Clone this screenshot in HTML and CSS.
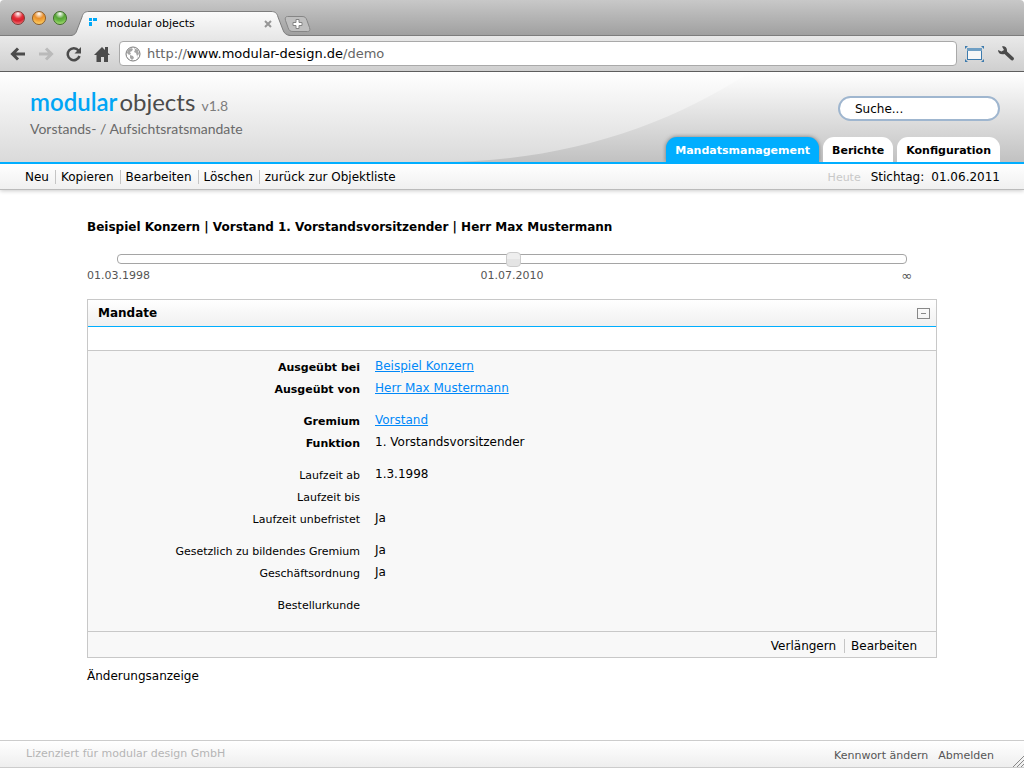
FILE: index.html
```html
<!DOCTYPE html>
<html lang="de">
<head>
  <meta charset="UTF-8">
  <meta name="viewport" content="width=device-width, initial-scale=1.0">
  <title>modular objects</title>
  <link rel="stylesheet" href="styles.css">
</head>
<body>

  <!-- Browserfenster -->
  <div class="browser">
    <div class="titlebar">
      <div class="lights">
        <span class="light red"></span>
        <span class="light orange"></span>
        <span class="light green"></span>
      </div>
      <div class="tab">
        <svg class="tab-shape" width="220" height="25" viewBox="0 0 220 25">
          <defs>
            <linearGradient id="tabFill" x1="0" y1="0" x2="0" y2="1">
              <stop offset="0" stop-color="#fbfbfb"/>
              <stop offset="1" stop-color="#e9e9e9"/>
            </linearGradient>
          </defs>
          <path d="M0 25C4 24 5 22 6 19L11 6C12 2 14 .5 18 .5H200C204 .5 206 2 207 6L212 19C213 22 215 24 219 25Z" fill="url(#tabFill)"/>
          <path d="M0 24.500C4 24 5 22 6 19L11 6C12 2 14 .5 18 .5H200C204 .5 206 2 207 6L212 19C213 22 215 24 219 24.500" fill="none" stroke="#7d7d7d"/>
        </svg>
        <svg class="favicon" width="8" height="8" viewBox="0 0 8 8" fill="#00a8f8">
          <path d="M0 0h3v3H0zM4 0h4v3H4zM0 4h3v4H0z"/>
        </svg>
        <span class="tab-title">modular objects</span>
        <button class="tab-close" aria-label="Tab schließen">
          <svg width="8" height="8" viewBox="0 0 8 8"><path d="M1 1l6 6M7 1L1 7" stroke="#969696" stroke-width="2"/></svg>
        </button>
      </div>
      <button class="new-tab" aria-label="Neuer Tab">
        <svg width="27" height="16" viewBox="0 0 27 16">
          <path d="M3.500 .5H18c3 0 4 1 5 4l2.500 7c1 3 0 4-2 4H9c-3 0-4-1-5-4L1.500 4.500C.8 2 1.500 .5 3.500 .5Z" fill="#bfbfbf" stroke="#868686"/>
          <path d="M12 3.500h3v3h3v3h-3v3h-3v-3H9v-3h3z" fill="#fff" stroke="#848484"/>
        </svg>
      </button>
    </div>
    <div class="navbar">
      <button class="nav-btn" aria-label="Zurück">
        <svg width="16" height="16" viewBox="0 0 16 16"><path d="M8 2.500L2.500 8 8 13.500M3 8h12" fill="none" stroke="#4b4b4b" stroke-width="3"/></svg>
      </button>
      <button class="nav-btn" aria-label="Vorwärts">
        <svg width="16" height="16" viewBox="0 0 16 16"><path d="M8 2.500L13.500 8 8 13.500M13 8H1" fill="none" stroke="#bababa" stroke-width="3"/></svg>
      </button>
      <button class="nav-btn" aria-label="Neu laden">
        <svg width="16" height="16" viewBox="0 0 16 16">
          <path d="M12.500 4.500A6 6 0 1 0 13.500 10" fill="none" stroke="#4b4b4b" stroke-width="2.500"/>
          <path d="M15 1v6.500H8.500z" fill="#4b4b4b"/>
        </svg>
      </button>
      <button class="nav-btn" aria-label="Startseite">
        <svg width="16" height="16" viewBox="0 0 16 16" fill="#4b4b4b"><path d="M8 1L0 9h2.500v7H7v-5h3v5h4V9h2l-2-2V1h-3v3z"/></svg>
      </button>
      <label class="address">
        <svg width="16" height="16" viewBox="0 0 16 16">
          <circle cx="8" cy="8" r="7" fill="#fff" stroke="#777"/>
          <path d="M2.500 4L6 2l2 1-1 2-2 1 1 2-2 1-2-2zM9 2l4 2 1 4-2 2-1-3-2-1 1-2zM5 9l3 1 1 2-2 2-2-2zM12 11l1-1-1 2z" fill="#a6a6a6"/>
        </svg>
        <span class="url"><span>http://</span>www.modular-design.de<span>/demo</span></span>
      </label>
      <button class="nav-btn" aria-label="Vollbild">
        <svg width="20" height="18" viewBox="0 0 20 18">
          <path d="M0 1h3L0 4zM19 1h-3l3 3zM0 17h3l-3-3zM19 17h-3l3-3z" fill="#3d7bad"/>
          <rect x="2.500" y="4.500" width="14" height="10" fill="#f6f6f6" stroke="#3d7bad"/>
          <path d="M2 3h15v3H2z" fill="#6f9fc4"/>
        </svg>
      </button>
      <button class="nav-btn" aria-label="Einstellungen">
        <svg width="18" height="18" viewBox="0 0 18 18">
          <path d="M5 1.500C8 .5 10.500 3 10 6.500l6.500 6c1.500 1.500-1 4-2.500 2.500L7.500 9C4 10 1 8.500 1 5l3.500 1.500L7 5z" fill="#4b4b4b"/>
        </svg>
      </button>
    </div>
  </div>

  <!-- Kopfbereich -->
  <header class="header">
    <svg class="swoosh" width="584" height="90" viewBox="0 0 584 90">
      <defs>
        <linearGradient id="swooshFill" x1="0" y1="0" x2="0" y2="1">
          <stop offset="0" stop-color="#ffffff"/>
          <stop offset="0.150" stop-color="#f6f6f6"/>
          <stop offset="1" stop-color="#c1c1c1"/>
        </linearGradient>
      </defs>
      <path d="M0 90C120 90 225 56 310 0H584V90Z" fill="url(#swooshFill)"/>
    </svg>
    <div class="brand">
      <div class="logo"><b>modular</b><span>objects</span> <small>v1.8</small></div>
      <div class="subtitle">Vorstands- / Aufsichtsratsmandate</div>
    </div>
    <div class="header-right">
      <input class="search" type="text" value="Suche..." aria-label="Suche">
      <nav class="tabs">
        <a class="active" href="#">Mandatsmanagement</a>
        <a href="#">Berichte</a>
        <a href="#">Konfiguration</a>
      </nav>
    </div>
  </header>

  <div class="toolbar">
    <nav class="actions">
      <a href="#">Neu</a>
      <a href="#">Kopieren</a>
      <a href="#">Bearbeiten</a>
      <a href="#">Löschen</a>
      <a href="#">zurück zur Objektliste</a>
    </nav>
    <div class="date">
      <a href="#">Heute</a>
      <span>Stichtag:</span>
      <span>01.06.2011</span>
    </div>
  </div>

  <!-- Inhalt -->
  <main class="content">
    <h1>Beispiel Konzern | Vorstand 1. Vorstandsvorsitzender | Herr Max Mustermann</h1>

    <div class="timeline">
      <input type="range" min="0" max="1000" value="502" aria-label="Zeitpunkt">
      <div class="timeline-labels">
        <span>01.03.1998</span>
        <span>01.07.2010</span>
        <span class="open-end">∞</span>
      </div>
    </div>

    <section class="panel">
      <div class="panel-head">
        <h2>Mandate</h2>
        <button class="collapse" aria-label="Einklappen"></button>
      </div>
      <div class="panel-space"></div>
      <div class="panel-body">
        <dl class="group strong">
          <dt>Ausgeübt bei</dt><dd><a href="#">Beispiel Konzern</a></dd>
          <dt>Ausgeübt von</dt><dd><a href="#">Herr Max Mustermann</a></dd>
        </dl>
        <dl class="group strong">
          <dt>Gremium</dt><dd><a href="#">Vorstand</a></dd>
          <dt>Funktion</dt><dd>1. Vorstandsvorsitzender</dd>
        </dl>
        <dl class="group">
          <dt>Laufzeit ab</dt><dd>1.3.1998</dd>
          <dt>Laufzeit bis</dt><dd></dd>
          <dt>Laufzeit unbefristet</dt><dd>Ja</dd>
        </dl>
        <dl class="group">
          <dt>Gesetzlich zu bildendes Gremium</dt><dd>Ja</dd>
          <dt>Geschäftsordnung</dt><dd>Ja</dd>
        </dl>
        <dl class="group">
          <dt>Bestellurkunde</dt><dd></dd>
        </dl>
      </div>
      <div class="panel-foot">
        <a href="#">Verlängern</a>
        <a href="#">Bearbeiten</a>
      </div>
    </section>

    <a class="changes" href="#">Änderungsanzeige</a>
  </main>

  <footer class="footer">
    <span class="license">Lizenziert für modular design GmbH</span>
    <nav>
      <a href="#">Kennwort ändern</a>
      <a href="#">Abmelden</a>
    </nav>
    <svg class="grip" width="12" height="12" viewBox="0 0 12 12"><path d="M1 12L12 1M5 12l7-7M9 12l3-3" stroke="#888"/></svg>
  </footer>

</body>
</html>
```
FILE: styles.css
```css
* {
  box-sizing: border-box;
}

body {
  margin: 0;
  min-height: 100vh;
  display: flex;
  flex-direction: column;
  background: #fff;
  color: #000;
  font-family: Verdana, "DejaVu Sans", sans-serif;
  font-size: 12px;
}

a {
  color: inherit;
  text-decoration: none;
}

button {
  padding: 0;
  border: 0;
  background: none;
}

svg {
  display: block;
}

/* Browserfenster */
.browser {
  border-bottom: 1px solid #5e5e5e;
}

.titlebar {
  height: 36px;
  display: flex;
  align-items: flex-end;
  border-bottom: 1px solid #7d7d7d;
  border-radius: 4px 4px 0 0;
  background: linear-gradient(#c8c8c8, #a0a0a0);
}

.lights {
  display: flex;
  gap: 7px;
  padding: 0 4px 10px 11px;
}

.light {
  width: 14px;
  height: 14px;
  border: 1px solid #7d3a35;
  border-radius: 50%;
}

.red {
  background: radial-gradient(circle at 50% 15%, #fff 0, #e5303a 40%, #d81f2c 60%, #ff9a9a 100%);
}

.orange {
  border-color: #8f5b24;
  background: radial-gradient(circle at 50% 15%, #fff 0, #e88f2c 40%, #f3a83c 60%, #ffe680 100%);
}

.green {
  border-color: #3d6b27;
  background: radial-gradient(circle at 50% 15%, #fff 0, #57a536 40%, #68b845 60%, #c8f08a 100%);
}

.tab {
  position: relative;
  width: 220px;
  height: 25px;
  margin-bottom: -1px;
  padding: 0 19px 0 18px;
  display: flex;
  align-items: center;
  font-size: 11px;
}

.tab > * {
  position: relative;
}

.tab .tab-shape {
  position: absolute;
  left: 0;
  top: 0;
}

.favicon {
  margin-bottom: 4px;
}

.tab-title {
  flex: 1;
  margin-left: 9px;
}

.new-tab {
  margin: 0 0 3px -7px;
}

.navbar {
  height: 35px;
  display: flex;
  align-items: center;
  gap: 12px;
  padding: 0 9px 0 10px;
  background: linear-gradient(#e9e9e9, #cfcfcf);
}

.address {
  flex: 1;
  height: 25px;
  display: flex;
  align-items: center;
  gap: 6px;
  margin-left: -3px;
  margin-right: -4px;
  padding: 0 5px;
  border: 1px solid #a9a9a9;
  border-radius: 4px;
  background: #fff;
  font-size: 13px;
}

.url span {
  color: #666;
}

/* Kopfbereich */
.header {
  position: relative;
  height: 92px;
  display: flex;
  justify-content: space-between;
  padding: 0 24px 0 30px;
  border-bottom: 2px solid #00aeff;
  background: linear-gradient(#fff, #dadada);
}

.swoosh {
  position: absolute;
  right: 0;
  top: 0;
}

.brand {
  padding-top: 15px;
  color: #6a6a6a;
  font-family: Lato, "Open Sans", sans-serif;
}

.logo {
  font-size: 24px;
  line-height: 30px;
}

.logo b {
  color: #00a5f5;
  font-weight: 600;
}

.logo span {
  margin-left: 2px;
  color: #4b4b4b;
}

.logo small {
  font-size: 14px;
  color: #7d7d7d;
}

.subtitle {
  font-size: 14px;
  line-height: 16px;
}

.header-right {
  position: relative;
  display: flex;
  flex-direction: column;
  align-items: flex-end;
  justify-content: space-between;
  padding-top: 24px;
}

.search {
  width: 162px;
  height: 25px;
  padding: 0 15px;
  border: 2px solid #9fb6cf;
  border-radius: 13px;
  background: #fff;
  font: inherit;
}

.tabs {
  display: flex;
  gap: 4px;
  font-size: 11px;
  font-weight: bold;
}

.tabs a {
  padding: 3px 9px 0;
  border-radius: 11px 11px 0 0;
  background: #fff;
  line-height: 22px;
}

.tabs .active {
  background: #00aeff;
  color: #fff;
  box-shadow: 0 0 4px #777;
  clip-path: inset(-4px -4px 0 -4px);
}

.toolbar {
  height: 26px;
  display: flex;
  justify-content: space-between;
  align-items: center;
  padding: 0 24px 0 25px;
  border-bottom: 1px solid #bbb;
  background: linear-gradient(#fff, #f0f0f0);
  box-shadow: 0 1px 4px #ccc;
}

.actions {
  display: flex;
}

.actions a + a {
  margin-left: 6px;
  padding-left: 5px;
  border-left: 1px solid #c5c5c5;
}

.date {
  display: flex;
  align-items: baseline;
  gap: 7px;
}

.date a {
  margin-right: 3px;
  color: #c8c8c8;
  font-size: 11px;
}

/* Inhalt */
.content {
  flex: 1;
  padding: 29px 87px 20px;
}

h1 {
  margin: 0;
  font-size: 12px;
  line-height: 16px;
}

.timeline {
  margin-top: 16px;
  color: #555;
  font-size: 11px;
}

.timeline input {
  display: block;
  width: calc(100% - 60px);
  height: 16px;
  margin: 0 30px;
  -webkit-appearance: none;
  appearance: none;
  background: none;
}

.timeline input::-webkit-slider-runnable-track {
  height: 10px;
  border: 1px solid #a5a5a5;
  border-radius: 4px;
  background: #fff;
}

.timeline input::-webkit-slider-thumb {
  -webkit-appearance: none;
  width: 15px;
  height: 15px;
  margin-top: -3px;
  border: 1px solid #ccc;
  border-radius: 4px;
  background: linear-gradient(#eee 50%, #e4e4e4 50%);
}

.timeline-labels {
  display: grid;
  grid-template-columns: repeat(3, 1fr);
  line-height: 18px;
}

.timeline-labels span:nth-child(2) {
  text-align: center;
}

.timeline-labels .open-end {
  padding-right: 25px;
  font-size: 13px;
  text-align: right;
}

.panel {
  margin-top: 14px;
  border: 1px solid #c8c8c8;
}

.panel-head {
  height: 27px;
  display: flex;
  align-items: center;
  justify-content: space-between;
  padding: 0 6px 0 10px;
  border-bottom: 1px solid #00aeff;
  background: linear-gradient(#fff, #f0f0f0);
}

h2 {
  margin: 0;
  font-size: 12px;
}

.collapse {
  width: 13px;
  height: 11px;
  display: flex;
  align-items: center;
  justify-content: center;
  border: 1px solid #888;
}

.collapse::before {
  content: "";
  width: 5px;
  height: 1px;
  background: #888;
}

.panel-space {
  height: 24px;
  border-bottom: 1px solid #c8c8c8;
}

.panel-body {
  padding: 4px 0 16px;
  background: #f8f8f8;
}

.group {
  display: grid;
  grid-template-columns: 272px 1fr;
  grid-auto-rows: 22px;
  column-gap: 15px;
  margin: 0 0 10px;
  line-height: 22px;
}

.group:last-child {
  margin-bottom: 0;
}

dt {
  padding-top: 2px;
  font-size: 11px;
  text-align: right;
}

.strong dt {
  font-weight: bold;
}

dd {
  margin: 0;
}

dd a {
  color: #0088f8;
  text-decoration: underline;
}

.panel-foot {
  height: 26px;
  display: flex;
  align-items: center;
  justify-content: flex-end;
  padding: 2px 19px 0 0;
  border-top: 1px solid #c8c8c8;
  background: #f8f8f8;
}

.panel-foot a + a {
  margin-left: 8px;
  padding-left: 6px;
  border-left: 1px solid #c5c5c5;
}

.changes {
  display: inline-block;
  margin-top: 10px;
  line-height: 16px;
}

.footer {
  position: relative;
  height: 28px;
  display: flex;
  align-items: center;
  justify-content: space-between;
  padding: 0 30px 0 26px;
  border-top: 1px solid #ccc;
  border-bottom: 1px solid #ccc;
  background: linear-gradient(#fff, #eee);
  color: #555;
  font-size: 11px;
}

.footer nav {
  display: flex;
  gap: 10px;
  padding-top: 2px;
}

.license {
  padding-bottom: 2px;
  color: #b5b5b5;
}

.grip {
  position: absolute;
  right: 0;
  bottom: 0;
}
```
